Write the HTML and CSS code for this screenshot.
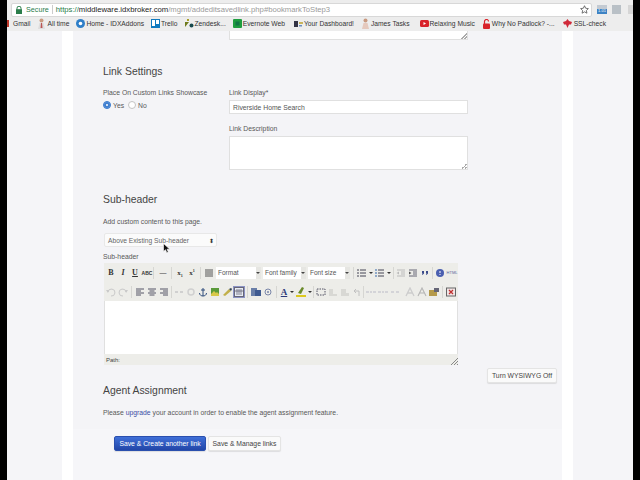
FILE: index.html
```html
<!DOCTYPE html>
<html lang="en">
<head>
<meta charset="utf-8">
<title>Link Settings</title>
<link rel="stylesheet" href="styles.css">
</head>
<body>
<div class="app">
  <header class="chrome">
    <div class="addr-row">
      <div class="omnibox">
        <svg class="lock" width="6" height="8" viewBox="0 0 6 8"><path d="M1 3.500V2.200a2 2 0 0 1 4 0v1.300" fill="none" stroke="#2a7d4a"/><rect y="3.200" width="6" height="4.800" fill="#2a7d4a"/></svg>
        <span class="secure">Secure</span><span class="divider"></span>
        <span class="url"><span class="https">https://</span><span class="host">middleware.idxbroker.com</span>/mgmt/addeditsavedlink.php#bookmarkToStep3</span>
        <svg class="star" width="9" height="9" viewBox="0 0 10 10"><path d="M5 .8l1.300 2.800 3 .4-2.200 2.100.6 3L5 7.600 2.300 9.100l.6-3L.7 4l3-.4z" fill="none" stroke="#555" stroke-width=".9"/></svg>
      </div>
      <div class="exts">
        <span class="ext ext-blue">1.01</span>
        <span class="ext ext-grey"></span>
        <span class="ext ext-pale"></span>
      </div>
    </div>
    <nav class="bookmarks">
      <span class="bm bm-gmail"><i class="ic-red-m"></i>Gmail</span>
      <span class="bm"><svg width="9" height="11" viewBox="0 0 9 11"><circle cx="4.500" cy="2.500" r="2" fill="#c99a80"/><path d="M1 11l1.500-6h4L8 11z" fill="#ddd"/><path d="M4 5h1l.5 5h-2z" fill="#b55"/></svg>All time</span>
      <span class="bm"><svg width="9" height="9" viewBox="0 0 9 9"><circle cx="4.500" cy="4.500" r="4.500" fill="#2f7fc8"/><circle cx="4.500" cy="4.500" r="1.800" fill="#fff"/></svg>Home - IDXAddons</span>
      <span class="bm"><svg width="9" height="9" viewBox="0 0 9 9"><rect width="9" height="9" fill="#0f79bf"/><rect x="1" y="1" width="3" height="6" fill="#fff"/><rect x="5" y="1" width="3" height="4" fill="#fff"/></svg>Trello</span>
      <span class="bm"><svg width="9" height="9" viewBox="0 0 9 9"><path d="M0 3h4L0 8z" fill="#6f7a1c"/><circle cx="6.500" cy="6.500" r="2" fill="#17494d"/><path d="M2 0h2v2H2z" fill="#a8a02a"/></svg>Zendesk...</span>
      <span class="bm"><svg width="9" height="9" viewBox="0 0 9 9"><rect width="9" height="9" rx="1" fill="#1f9d3f"/><rect x="2.500" y="2.500" width="4" height="4" fill="#174"/></svg>Evernote Web</span>
      <span class="bm bm-dash"><svg width="9" height="6" viewBox="0 0 9 6"><rect width="4" height="6" fill="#334"/><rect x="5" y="1" width="4" height="2" fill="#c9b45a"/><rect x="5" y="4" width="3" height="1.500" fill="#6a8fc0"/></svg>Your Dashboard!</span>
      <span class="bm"><svg width="9" height="11" viewBox="0 0 9 11"><circle cx="4.500" cy="2.500" r="2" fill="#c99a80"/><path d="M1 11l1.500-6h4L8 11z" fill="#e5c9bd"/></svg>James Tasks</span>
      <span class="bm bm-music"><svg width="9" height="7" viewBox="0 0 9 7"><rect width="9" height="7" rx="1.500" fill="#d8232a"/><path d="M3.500 2v3l2.500-1.500z" fill="#fff"/></svg>Relaxing Music</span>
      <span class="bm bm-pad"><svg width="7" height="10" viewBox="0 0 7 10"><path d="M1.500 5V2.500a2 2 0 0 1 4 0" fill="none" stroke="#d8232a" stroke-width="1.200"/><rect y="4.500" width="7" height="5.500" rx="1" fill="#d8232a"/></svg>Why No Padlock? -...</span>
      <span class="bm bm-ssl"><svg width="9" height="9" viewBox="0 0 9 9"><path d="M4.500 0l1.500 2 3 1-1 2.500h-2L4.500 9l-1.500-3.500H1L0 3l3-1z" fill="#d02a3a"/></svg>SSL-check</span>
    </nav>
  </header>

  <main class="page">
    <div class="gutter"></div>
    <div class="strip"></div>
    <section class="panel">
      <div class="body">
        <div class="top-fragment"><div class="top-textarea"></div></div>

        <h2 class="h-link">Link Settings</h2>
        <div class="link-grid">
          <div class="col-left">
            <div class="label">Place On Custom Links Showcase</div>
            <div class="radios">
              <span class="radio on"></span><span class="radio-text">Yes</span>
              <span class="radio"></span><span class="radio-text">No</span>
            </div>
          </div>
          <div class="col-right">
            <div class="label">Link Display*</div>
            <div class="input">Riverside Home Search</div>
            <div class="label label-desc">Link Description</div>
            <div class="textarea"></div>
          </div>
        </div>

        <h2 class="h-sub">Sub-header</h2>
        <div class="note">Add custom content to this page.</div>
        <div class="select">Above Existing Sub-header<span class="updown">⬍</span></div>
        <div class="label label-sub">Sub-header</div>

        <div class="editor">
          <div class="tb tb1">
            <b class="t t-b">B</b><i class="t t-i">I</i><u class="t t-u">U</u><span class="t t-abc">ABC</span>
            <span class="sep s1"></span>
            <span class="t t-hr">—</span>
            <span class="sep s2"></span>
            <span class="t t-x">x<sub>1</sub></span><span class="t t-x">x<sup>1</sup></span>
            <span class="sep s2"></span>
            <svg class="g" width="12" height="10" viewBox="0 0 12 10"><path d="M2 2h8M2 4h8M2 6h8M2 8h8" stroke="#555"/></svg>
            <span class="dd dd-1">Format<i></i></span>
            <span class="dd dd-2">Font family<i></i></span>
            <span class="dd dd-3">Font size<i></i></span>
            <span class="sep s3"></span>
            <svg class="g w18" width="18" height="10" viewBox="0 0 18 10"><path d="M1 2h2M1 5h2M1 8h2M4 2h6M4 5h6M4 8h6" stroke="#445"/><path d="M13 4h4l-2 2z" fill="#333"/></svg>
            <svg class="g w18" width="18" height="10" viewBox="0 0 18 10"><path d="M1 2h2M1 5h2M1 8h2" stroke="#36a"/><path d="M4 2h6M4 5h6M4 8h6" stroke="#445"/><path d="M13 4h4l-2 2z" fill="#333"/></svg>
            <span class="sep s4"></span>
            <svg class="g" width="12" height="10" viewBox="0 0 12 10"><path d="M2 2h8M6 4h4M6 6h4M2 8h8" stroke="#bbb"/><path d="M4 3.500v3L1.500 5z" fill="#bbb"/></svg>
            <svg class="g" width="12" height="10" viewBox="0 0 12 10"><path d="M2 2h8M6 4h4M6 6h4M2 8h8" stroke="#667"/><path d="M2 3.500v3L4.500 5z" fill="#555"/></svg>
            <svg class="g" width="12" height="10" viewBox="0 0 12 10"><path d="M3 3h2v2.500L3.500 7H3l.7-1.500H3zM7 3h2v2.500L7.500 7H7l.7-1.500H7z" fill="#3a4a8a"/></svg>
            <span class="sep s5"></span>
            <svg class="g" width="12" height="10" viewBox="0 0 12 10"><circle cx="6" cy="5" r="4" fill="#4a5fb0"/><path d="M6 3v2M6 6v1" stroke="#fff"/></svg>
            <span class="t t-html">HTML</span>
          </div>
          <div class="tb tb2">
            <svg class="g" width="12" height="10" viewBox="0 0 12 10"><path d="M3 5a3.500 3.500 0 1 1 3 4" fill="none" stroke="#c9c9c9"/><path d="M1 3l3 0-1 3z" fill="#c9c9c9"/></svg>
            <svg class="g" width="12" height="10" viewBox="0 0 12 10"><path d="M9 5a3.500 3.500 0 1 0-3 4" fill="none" stroke="#c9c9c9"/><path d="M11 3H8l1 3z" fill="#c9c9c9"/></svg>
            <span class="sep s6"></span>
            <svg class="g" width="12" height="10" viewBox="0 0 12 10"><path d="M2 2h8M2 4h5M2 6h8M2 8h5" stroke="#556"/></svg>
            <svg class="g" width="12" height="10" viewBox="0 0 12 10"><path d="M2 2h8M3.500 4h5M2 6h8M3.500 8h5" stroke="#556"/></svg>
            <svg class="g" width="12" height="10" viewBox="0 0 12 10"><path d="M2 2h8M5 4h5M2 6h8M5 8h5" stroke="#556"/></svg>
            <span class="sep s7"></span>
            <svg class="g" width="12" height="10" viewBox="0 0 12 10"><path d="M2 5h3M7 5h3" stroke="#d0d0d0" stroke-width="2"/></svg>
            <svg class="g" width="12" height="10" viewBox="0 0 12 10"><circle cx="6" cy="5" r="3" fill="none" stroke="#d0d0d0" stroke-width="1.500"/></svg>
            <svg class="g" width="12" height="10" viewBox="0 0 12 10"><path d="M6 1v8M4 3h4M2.500 6c0 2 1.800 3 3.500 3s3.500-1 3.500-3" fill="none" stroke="#2c4a7a"/></svg>
            <svg class="g" width="12" height="10" viewBox="0 0 12 10"><rect x="2" y="1" width="8" height="8" fill="#5a9a3a"/><path d="M2 7l3-3 2 2 1-1 2 2v2H2z" fill="#d8c84a"/></svg>
            <svg class="g" width="12" height="10" viewBox="0 0 12 10"><path d="M2 8l6-6 2 2-6 5z" fill="#c2b04a"/><path d="M8 2l2 2 1-2-1-1z" fill="#345"/></svg>
            <span class="g-active"><svg width="10" height="10" viewBox="0 0 10 10"><rect x=".5" y=".5" width="9" height="9" fill="#e8ecf4" stroke="#667"/><path d="M3 2v6M5 2v6M7 2v6M1 4h8" stroke="#667" stroke-width=".8"/></svg></span>
            <span class="sep s8"></span>
            <svg class="g" width="12" height="10" viewBox="0 0 12 10"><rect x="1" y="1" width="6" height="8" fill="#6a7fa8"/><rect x="5" y="3" width="6" height="6" fill="#3f5a90"/></svg>
            <svg class="g" width="12" height="10" viewBox="0 0 12 10"><circle cx="6" cy="5" r="3" fill="none" stroke="#7a86a8"/><circle cx="6" cy="5" r="1" fill="#7a86a8"/></svg>
            <span class="sep s9"></span>
            <span class="t t-a">A</span><span class="arrow"></span>
            <svg class="g g-hl" width="12" height="11" viewBox="0 0 12 11"><path d="M3 7l4-6 2 1-3 6z" fill="#6a8a2a"/><rect x="1" y="9" width="10" height="2" fill="#dcc81e"/></svg><span class="arrow"></span>
            <span class="sep s10"></span>
            <svg class="g" width="12" height="10" viewBox="0 0 12 10"><rect x="2" y="2" width="8" height="6" fill="none" stroke="#556" stroke-dasharray="1.500 1"/></svg>
            <svg class="g" width="12" height="10" viewBox="0 0 12 10"><path d="M2 2h4v5h4v2H2z" fill="#d8d8d4"/></svg>
            <svg class="g" width="12" height="10" viewBox="0 0 12 10"><path d="M2 2h5v4h3v3H2z" fill="#d8d8d4"/></svg>
            <svg class="g" width="12" height="10" viewBox="0 0 12 10"><path d="M3 4h5v5M3 4l2-2M3 4l2 2" fill="none" stroke="#c0c0c0"/></svg>
            <span class="sep s11"></span>
            <svg class="g" width="12" height="10" viewBox="0 0 12 10"><path d="M1 5h3M5 5h2M8 5h3" stroke="#d4d4d8" stroke-width="2"/></svg>
            <svg class="g" width="12" height="10" viewBox="0 0 12 10"><path d="M1 5h3M5 5h2M8 5h3" stroke="#d4d4d8" stroke-width="2"/></svg>
            <svg class="g" width="12" height="10" viewBox="0 0 12 10"><path d="M2 5h3M7 5h3" stroke="#d4d4d8" stroke-width="2"/></svg>
            <svg class="g g-shift" width="12" height="10" viewBox="0 0 12 10"><path d="M2 9l4-8 4 8M3.500 6h5" fill="none" stroke="#cdcdcd" stroke-width="1.300"/></svg>
            <svg class="g" width="12" height="10" viewBox="0 0 12 10"><path d="M2 9l4-8 4 8M3.500 6h5" fill="none" stroke="#b5b5b5" stroke-width="1.100"/></svg>
            <svg class="g" width="12" height="10" viewBox="0 0 12 10"><rect x="1" y="3" width="8" height="6" fill="#b59a4a"/><path d="M6 1h5v4H6z" fill="#667"/></svg>
            <span class="sep s12"></span>
            <svg class="g" width="12" height="10" viewBox="0 0 12 10"><rect x="1.500" y="1" width="9" height="8" fill="#f2e6e6" stroke="#666"/><path d="M4 3l4 4M8 3l-4 4" stroke="#c03030" stroke-width="1.300"/></svg>
          </div>
          <div class="edit-area"></div>
          <div class="status">Path:<svg class="grip" width="7" height="7" viewBox="0 0 7 7"><path d="M7 0L0 7M7 3L3 7M7 6L6 7" stroke="#888"/></svg></div>
        </div>

        <div class="wys-row"><button class="btn btn-wys">Turn WYSIWYG Off</button></div>

        <h2 class="h-agent">Agent Assignment</h2>
        <div class="note note-agent">Please <a class="link">upgrade</a> your account in order to enable the agent assignment feature.</div>
      </div>

      <footer class="actions">
        <button class="btn btn-primary">Save &amp; Create another link</button>
        <button class="btn btn-plain">Save &amp; Manage links</button>
      </footer>
    </section>
    <div class="strip"></div>
    <div class="gutter gutter-r"></div>
  </main>
  <svg class="cursor" width="8" height="11" viewBox="0 0 8 11"><path d="M.5.500v8l2-1.800 1.300 3 1.500-.6-1.300-2.900H6.800z" fill="#111" stroke="#fff" stroke-width=".6"/></svg>
</div>
</body>
</html>
```

FILE: styles.css
```css
* { box-sizing: border-box; }
html, body { margin: 0; height: 100%; }
body {
  background: #000;
  overflow: hidden;
  font-family: "Liberation Sans", Arial, sans-serif;
  color: #444;
}
.app {
  position: relative;
  width: 626px;
  height: 480px;
  margin-left: 7px;
  display: flex;
  flex-direction: column;
  background: #f5f5f8;
  overflow: hidden;
}
.cursor { position: absolute; left: 156px; top: 243px; }
.chrome { height: 31px; background: #ededed; flex: none; overflow: hidden; }
.addr-row { height: 17px; display: flex; align-items: center; padding: 2px 0 0 4px; }
.omnibox {
  width: 581px;
  height: 14px;
  background: #fff;
  border: 1px solid #d8d8d8;
  border-radius: 2px;
  display: flex;
  align-items: center;
  padding-left: 4px;
  font-size: 7.7px;
  color: #9a9a9a;
  white-space: nowrap;
}
.lock { margin-right: 4px; }
.secure { color: #2a7d4a; font-size: 7.2px; }
.divider { width: 1px; height: 9px; background: #ccc; margin: 0 3px; }
.https { color: #2a7d4a; }
.host { color: #222; }
.url { flex: 1; }
.star { margin-right: 2px; }
.exts { display: flex; margin-left: 5px; align-items: center; }
.ext { height: 9px; display: block; font-size: 4px; color: #fff; text-align: center; line-height: 12px; }
.ext-blue { width: 10px; background: linear-gradient(#c3cad2 40%, #3d83c4 40%); }
.ext-grey { width: 9px; margin-left: 5px; background: #b9c0c6; }
.ext-pale { width: 5px; margin-left: 7px; background: #d6d6d6; }
.bookmarks {
  height: 13px;
  display: flex;
  align-items: center;
  font-size: 6.7px;
  color: #333;
  white-space: nowrap;
}
.bm { display: flex; align-items: center; gap: 1px; margin-right: 7px; }
.bm svg { flex: none; }
.bm-dash { margin-left: 2px; }
.bm-music { margin-left: 3px; }
.bm-pad { margin-left: 1px; gap: 2px; }
.bm-ssl { margin-left: 1px; gap: 2px; }
.ic-red-m { width: 2px; height: 7px; background: #c0392b; display: block; margin-right: 3px; }
.page { flex: 1; display: flex; min-height: 0; }
.gutter { width: 55px; flex: none; }
.gutter-r { width: 61px; }
.strip { width: 11px; background: #fff; flex: none; }
.panel { width: 489px; flex: none; overflow: hidden; display: flex; flex-direction: column; background: #f4f4f7; }
.body { padding-left: 30px; }
.top-fragment { height: 9px; padding-left: 126px; }
.top-textarea, .textarea {
  background-color: #fff;
  background-image: linear-gradient(135deg, transparent 50%, #aaa 50%, #aaa 60%, transparent 60%, transparent 75%, #aaa 75%, #aaa 85%, transparent 85%);
  background-size: 6px 6px;
  background-position: right bottom;
  background-repeat: no-repeat;
  border: 1px solid #e0e0e0;
}
.top-textarea {
  width: 239px; height: 9px;
  border-top: 0;
}
h2 { font-weight: 400; margin: 0; color: #444; }
.h-link { margin-top: 25px; font-size: 10.4px; line-height: 14px; }
.link-grid { display: flex; margin-top: 9px; }
.col-left { width: 126px; }
.label { font-size: 6.8px; line-height: 9px; color: #585858; }
.radios { display: flex; align-items: center; margin-top: 4px; font-size: 6.8px; color: #585858; }
.radio { width: 8px; height: 8px; border-radius: 50%; border: 1px solid #c4c4c4; background: #fff; margin-right: 2px; }
.radio.on { background: #3f7fd0; border-color: #3f7fd0; box-shadow: inset 0 0 0 2px #3f7fd0, inset 0 0 0 4px #fff; }
.radio-text { margin-right: 4px; }
.col-right { width: 239px; }
.input {
  height: 14px;
  margin-top: 3px;
  background: #fff;
  border: 1px solid #e0e0e0;
  font-size: 6.8px;
  line-height: 13px;
  padding-left: 3px;
  color: #555;
}
.label-desc { margin-top: 10px; }
.textarea { height: 34px; margin-top: 3px; }
.h-sub { margin-top: 23px; font-size: 10.4px; line-height: 14px; }
.note { font-size: 6.8px; line-height: 9px; color: #585858; }
.h-sub + .note { margin-top: 10px; }
.select {
  width: 113px; height: 14px;
  margin: 7px 0 0 1px;
  background: #fbfbfb;
  border: 1px solid #e8e8e8;
  border-radius: 2px;
  display: flex; justify-content: space-between; align-items: center;
  padding: 0 2px 0 3px;
  font-size: 6.7px;
  color: #666;
}
.updown { font-size: 6px; color: #333; }
.label-sub { margin-top: 5px; }
.editor { width: 354px; margin: 2px 0 0 1px; }
.tb {
  height: 19px;
  background: #edede9;
  display: flex;
  align-items: center;
  padding-left: 1px;
  font-size: 7px;
  color: #333;
}
.t { width: 12px; text-align: center; flex: none; }
.t-b, .t-i, .t-u { font-family: "Liberation Serif", serif; font-size: 8px; font-weight: 700; }
.t-abc { font-size: 5px; font-weight: 700; }
.t-hr { color: #444; }
.t-x { font-family: "Liberation Serif", serif; font-weight: 700; font-size: 7px; }
.t-x sub, .t-x sup { font-size: 4px; line-height: 0; }
.t-html { font-size: 4px; color: #5566a0; }
.t-a { font-family: "Liberation Serif", serif; font-weight: 700; font-size: 9px; color: #2c3a7a; text-decoration: underline; width: 10px; }
.g { width: 12px; flex: none; display: block; }
.w18 { width: 18px; margin-right: 0; }
.g-shift { margin-left: 3px; }
.g-active { width: 12px; height: 12px; border: 1px solid #8b93c4; background: #dfe3f2; display: flex; align-items: center; justify-content: center; flex: none; }
.g-active svg { display: block; }
.sep { width: 1px; height: 12px; background: #d6d6d2; flex: none; margin: 0 2px; }
.s1 { margin: 0 3px 0 0; }
.s3 { margin: 0 2px 0 1px; }
.s4 { margin: 0 1px; }
.s5 { margin: 0 1px; }
.s7 { margin: 0 1px; }
.s10 { margin: 0 1px 0 0; }
.s11 { margin: 0 1px 0 0; }
.arrow { width: 0; height: 0; border: 2px solid transparent; border-top: 2px solid #333; border-bottom: 0; margin: 0 1px; flex: none; }
.dd {
  height: 12px;
  background: #fff;
  font-size: 6.5px;
  line-height: 11px;
  padding-left: 2px;
  color: #555;
  position: relative;
  flex: none;
  margin-right: 2px;
  border-right: 5px solid #e6e6e2;
}
.dd-1 { width: 45px; margin-left: 1px; }
.dd-2 { width: 43px; }
.dd-3 { width: 42px; }
.dd i { position: absolute; right: -4px; top: 5px; border: 2px solid transparent; border-top-color: #444; border-bottom: 0; }
.edit-area { height: 53px; background: #fff; border-left: 1px solid #e0e0e0; border-right: 1px solid #e0e0e0; }
.status {
  height: 11px;
  background: #edede9;
  font-size: 6px;
  line-height: 9px;
  padding: 1px 0 0 2px;
  color: #444;
  display: flex;
  justify-content: space-between;
  align-items: flex-end;
}
.grip { display: block; }
.wys-row { width: 454px; display: flex; justify-content: flex-end; margin-top: 3px; }
.btn {
  font-family: "Liberation Sans", Arial, sans-serif;
  font-size: 6.8px;
  border-radius: 2px;
  border: 1px solid #e4e4e4;
  background: #fafafa;
  color: #444;
  padding: 0;
  height: 15px;
  box-shadow: 0 1px 1px rgba(0,0,0,.1);
}
.btn-wys { width: 70px; }
.h-agent { font-size: 10.4px; line-height: 14px; margin-top: 1px; }
.note-agent { margin-top: 10px; }
.link { color: #3b4ea5; }
.actions {
  flex: 1;
  display: flex;
  gap: 2px;
  margin-top: 12px;
  padding: 7px 0 0 41px;
  align-items: flex-start;
  background: #f6f6f9;
}
.btn-primary {
  width: 92px;
  background: linear-gradient(#3f6fd8, #2246a8);
  border-color: #2a4fae;
  color: #fff;
}
.btn-plain { width: 73px; }
```
